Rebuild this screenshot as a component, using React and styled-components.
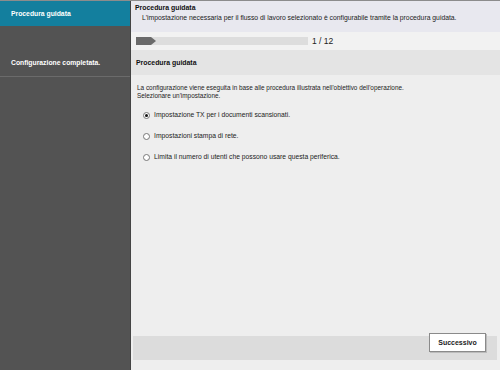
import React, { useState } from 'react';
import styled, { createGlobalStyle } from 'styled-components';

const GlobalStyle = createGlobalStyle`
  html, body {
    margin: 0;
    padding: 0;
    background: #eeeeee;
  }
  body {
    font-family: 'Liberation Sans', Arial, sans-serif;
  }
`;

const Page = styled.div`
  width: 500px;
  height: 370px;
  display: flex;
  border-top: 1px solid #8c8c8c;
  box-sizing: border-box;
  overflow: hidden;
`;

const Sidebar = styled.nav`
  width: 130px;
  flex-shrink: 0;
  background: #535353;
  border-right: 1px solid #444;
  display: flex;
  flex-direction: column;
`;

const NavItem = styled.div`
  height: ${props => props.tall ? '51px' : '25px'};
  display: flex;
  align-items: ${props => props.tall ? 'flex-end' : 'center'};
  padding: ${props => props.tall ? '0 0 10px 11px' : '0 0 1px 11px'};
  box-sizing: border-box;
  background: ${props => props.active ? '#137f9e' : 'transparent'};
  border-bottom: ${props => props.active ? 'none' : '1px solid #6b6b6b'};
  color: #fff;
  font-size: 6.8px;
  font-weight: bold;
`;

const Main = styled.main`
  flex: 1;
  display: flex;
  flex-direction: column;
  background: #eeeeee;
  min-width: 0;
`;

const Header = styled.header`
  background: #e8e8ef;
  height: 31px;
  padding: 3px 4px 0;
  box-sizing: border-box;
`;

const Title = styled.div`
  font-size: 6.9px;
  font-weight: bold;
  color: #111;
`;

const Description = styled.div`
  font-size: 6.8px;
  color: #222;
  margin-top: 3px;
  padding-left: 7px;
`;

const ProgressRow = styled.div`
  height: 18px;
  background: #f2f2f2;
  display: flex;
  align-items: center;
  padding-left: 5px;
  gap: 4px;
`;

const Track = styled.div`
  width: 172px;
  height: 8px;
  background: #dddddd;
  display: flex;
`;

const Counter = styled.span`
  font-size: 8.5px;
  color: #222;
`;

const SectionHeader = styled.div`
  height: 25px;
  background: #e4e4e4;
  display: flex;
  align-items: center;
  padding-left: 5px;
  font-size: 6.9px;
  font-weight: bold;
  color: #111;
`;

const Content = styled.div`
  flex: 1;
  padding: 9px 6px 0;
`;

const Intro = styled.p`
  margin: 0 0 12px;
  font-size: 6.4px;
  line-height: 7.5px;
  color: #222;
`;

const Options = styled.div`
  display: flex;
  flex-direction: column;
  gap: 13px;
  padding-left: 6px;
`;

const Option = styled.label`
  display: flex;
  align-items: center;
  gap: 4px;
  font-size: 6.75px;
  line-height: 8px;
  color: #222;
  cursor: pointer;
`;

const Radio = styled.span`
  width: 5px;
  height: 5px;
  border-radius: 50%;
  border: 1px solid #777;
  background: #fff;
  display: flex;
  align-items: center;
  justify-content: center;
  &::after {
    content: '';
    width: 3px;
    height: 3px;
    border-radius: 50%;
    background: ${props => props.checked ? '#111' : 'transparent'};
  }
`;

const Footer = styled.div`
  height: 24px;
  margin: 0 3px 10px 2px;
  background: #dcdcdc;
  display: flex;
  justify-content: flex-end;
  align-items: flex-start;
  padding-right: 11px;
`;

const Button = styled.button`
  margin-top: -3px;
  width: 57px;
  height: 19px;
  background: #fff;
  border: 1px solid #8a8a8a;
  box-shadow: 1px 1px 0 #bbb;
  font-family: 'Liberation Sans', Arial, sans-serif;
  font-size: 7px;
  font-weight: bold;
  color: #222;
  padding: 0;
  cursor: pointer;
`;

const options = [
  'Impostazione TX per i documenti scansionati.',
  'Impostazioni stampa di rete.',
  'Limita il numero di utenti che possono usare questa periferica.',
];

export default function App() {
  const [selected, setSelected] = useState(0);
  return (
    <>
      <GlobalStyle />
      <Page>
        <Sidebar>
          <NavItem active>Procedura guidata</NavItem>
          <NavItem tall>Configurazione completata.</NavItem>
        </Sidebar>
        <Main>
          <Header>
            <Title>Procedura guidata</Title>
            <Description>
              L'impostazione necessaria per il flusso di lavoro selezionato è configurabile tramite la procedura guidata.
            </Description>
          </Header>
          <ProgressRow>
            <Track>
              <svg width="20" height="8" viewBox="0 0 20 8">
                <path d="M0 0 H15 L20 4 L15 8 H0 Z" fill="#6a6a6a" />
              </svg>
            </Track>
            <Counter>1 / 12</Counter>
          </ProgressRow>
          <SectionHeader>Procedura guidata</SectionHeader>
          <Content>
            <Intro>
              La configurazione viene eseguita in base alle procedura illustrata nell'obiettivo dell'operazione.
              <br />
              Selezionare un'impostazione.
            </Intro>
            <Options>
              {options.map((text, i) => (
                <Option key={i} onClick={() => setSelected(i)}>
                  <Radio checked={selected === i} />
                  {text}
                </Option>
              ))}
            </Options>
          </Content>
          <Footer>
            <Button>Successivo</Button>
          </Footer>
        </Main>
      </Page>
    </>
  );
}
